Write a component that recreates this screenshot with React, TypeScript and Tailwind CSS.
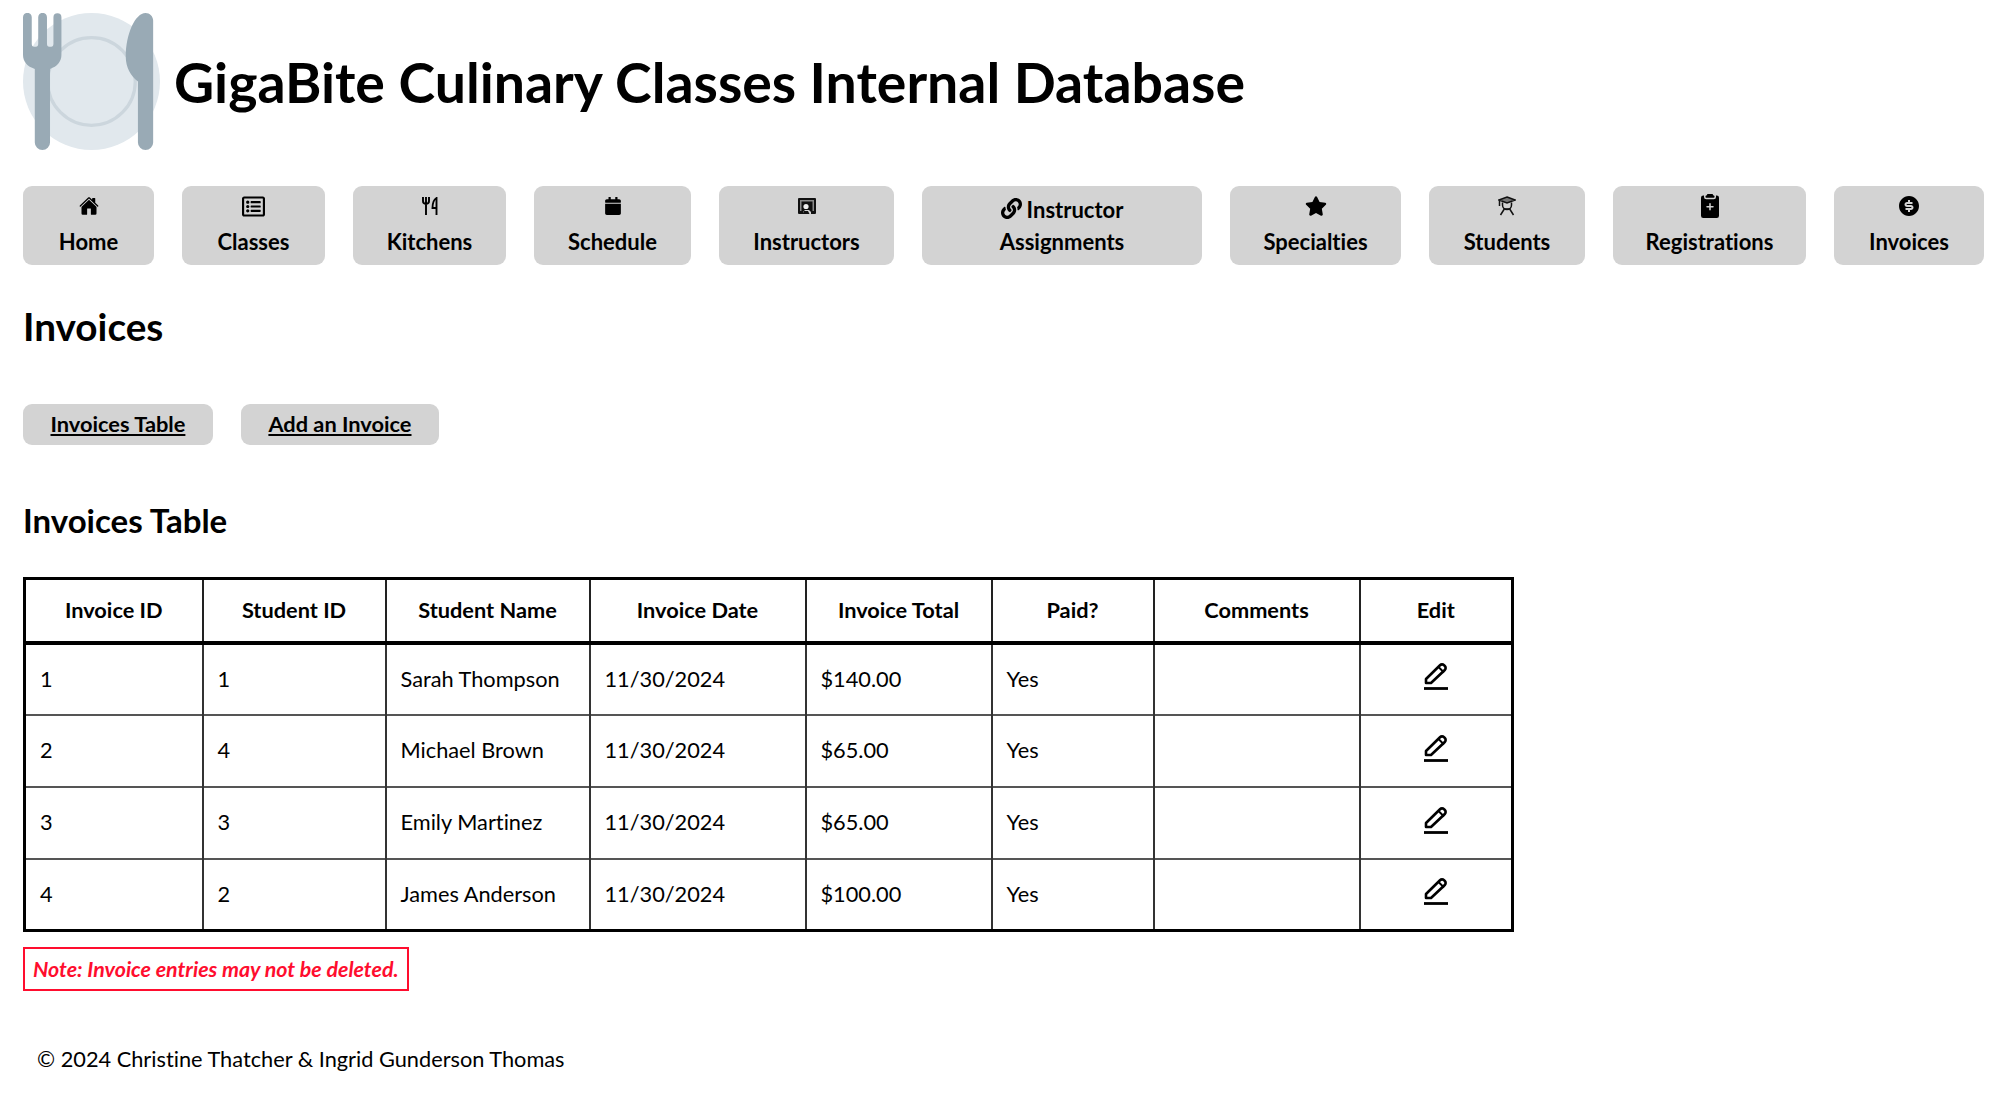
import { BsClipboard2PlusFill } from "react-icons/bs"
import { FaCalendar, FaLink, FaRegListAlt, FaStar } from "react-icons/fa"
import { IoHome } from "react-icons/io5"
import { RiMoneyDollarCircleFill } from "react-icons/ri"
import type { ReactNode } from "react"

const font = "font-['Lato','Open_Sans',sans-serif] [font-variant-ligatures:none]"

function PlateLogo() {
  return (
    <svg viewBox="0 0 36 36" className="h-[137px] w-[137px] shrink-0">
      <circle cx="18" cy="18" r="18" fill="#e1e8ed" />
      <circle cx="18" cy="18" r="11.500" fill="none" stroke="#ccd6dd" strokeWidth="0.850" />
      <path
        fill="#99aab5"
        d="M0 1.100a1.100 1.100 0 0 1 2.300 0v7c0 .5.200.8.600.8h.5c.4 0 .6-.3.600-.8v-7a1.100 1.100 0 0 1 2.300 0v7c0 .5.200.8.600.8h.5c.4 0 .6-.3.600-.8v-7a1.050 1.050 0 0 1 2.100 0V11c0 1.800-1.100 3.100-3 3.700V34a2 2 0 0 1-4 0V14.700C1.100 14.100 0 12.800 0 11z"
      />
      <path
        fill="#99aab5"
        d="M32.200 0c1.100 0 2 .9 2 2v32a2 2 0 0 1-4 0V18C28.300 16.600 27 14.200 27 11.500 27 5.500 29.500 0 32.200 0z"
      />
    </svg>
  )
}

function KitchenIcon() {
  return (
    <svg viewBox="0 0 16 18" className="h-[18px] w-[16px]" fill="none" stroke="#000" strokeWidth="1.900">
      <path d="M1 0v4c0 1.800 1 2.800 3 2.800S7 5.800 7 4V0M4 0v18" />
      <path d="M14.500 18V1C12 2.500 10.500 6 10.500 11h4" />
    </svg>
  )
}

function InstructorIcon() {
  return (
    <svg viewBox="0 0 18 16" className="h-[16px] w-[18px]">
      <path fill="#111" d="M1 0h16a1 1 0 0 1 1 1v14a1 1 0 0 1-1 1h-4v-2l-2-2H7l-2 2v2H1a1 1 0 0 1-1-1V1a1 1 0 0 1 1-1z" />
      <path fill="#8a8a8a" d="M2 2h14v11h-1.500V3.500h-11V13H2z" />
      <circle cx="8" cy="8.500" r="2.600" fill="#eeeeee" />
      <path fill="#111" d="M6 13h4l1.500 3h-7z" />
    </svg>
  )
}

function StudentIcon() {
  return (
    <svg viewBox="0 0 18 20" className="h-[20px] w-[18px]" fill="none" stroke="#111" strokeWidth="1.500">
      <path d="M9 1l8 3-8 3-8-3z" fill="#777" />
      <path d="M1.500 4.500V10" />
      <path d="M4.500 6.500V9a4.500 4.500 0 0 0 9 0V6.500" />
      <path d="M5.500 13h7M6 13.500L2.500 19M12 13.500l3.500 5.500" />
    </svg>
  )
}

function EditIcon() {
  return (
    <svg viewBox="0 0 26 28" className="h-[28px] w-[26px]" fill="none" stroke="#000">
      <path strokeWidth="2.600" strokeLinejoin="round" d="M3 21v-4L17 3.200a2.800 2.800 0 0 1 4 0l.800.800a2.800 2.800 0 0 1 0 4L8 21z" />
      <path strokeWidth="2" d="M15.500 5l5.500 5.500" />
      <path strokeWidth="2.800" d="M1 26.500h24" />
    </svg>
  )
}

function NavButton({ icon, label, inline, className }: { icon: ReactNode; label: ReactNode; inline?: boolean; className: string }) {
  return (
    <a className={`flex h-[79px] flex-col items-center rounded-[9px] bg-[#d3d3d3] pt-[4px] text-center text-[22px] leading-[32px] font-bold text-black ${className}`}>
      {inline ? (
        <span className="flex h-[36px] items-center gap-[5px]">{icon}<span className="pt-[3px]">Instructor</span></span>
      ) : (
        <span className="flex h-[32px] items-center">{icon}</span>
      )}
      <span className={inline ? "" : "pt-[4px]"}>{label}</span>
    </a>
  )
}

const invoices = [
  ["1", "1", "Sarah Thompson", "11/30/2024", "$140.00", "Yes"],
  ["2", "4", "Michael Brown", "11/30/2024", "$65.00", "Yes"],
  ["3", "3", "Emily Martinez", "11/30/2024", "$65.00", "Yes"],
  ["4", "2", "James Anderson", "11/30/2024", "$100.00", "Yes"],
]

const headers = ["Invoice ID", "Student ID", "Student Name", "Invoice Date", "Invoice Total", "Paid?", "Comments", "Edit"]

export default function App() {
  return (
    <div className={`${font} min-h-[1098px] bg-white pl-[23px] text-black`}>
      <header className="flex items-center gap-[14px] pt-[13px]">
        <PlateLogo />
        <h1 className="text-[55.4px] leading-[64px] font-bold">GigaBite Culinary Classes Internal Database</h1>
      </header>

      <nav className="mt-[36px] flex gap-[28px]">
        <NavButton className="w-[131px]" icon={<IoHome size={20} />} label="Home" />
        <NavButton className="w-[143px]" icon={<FaRegListAlt size={23} />} label="Classes" />
        <NavButton className="w-[153px]" icon={<KitchenIcon />} label="Kitchens" />
        <NavButton className="w-[157px]" icon={<FaCalendar size={18} />} label="Schedule" />
        <NavButton className="w-[175px]" icon={<InstructorIcon />} label="Instructors" />
        <NavButton inline className="w-[280px]" icon={<FaLink size={21} />} label="Assignments" />
        <NavButton className="w-[171px]" icon={<FaStar size={22} />} label="Specialties" />
        <NavButton className="w-[156px]" icon={<StudentIcon />} label="Students" />
        <NavButton className="w-[193px]" icon={<BsClipboard2PlusFill size={24} />} label="Registrations" />
        <NavButton className="w-[150px]" icon={<RiMoneyDollarCircleFill size={24} />} label="Invoices" />
      </nav>

      <h2 className="mt-[38px] text-[38.7px] leading-[46px] font-bold">Invoices</h2>

      <div className="mt-[55px] flex gap-[28px]">
        <a className="flex h-[41px] items-center rounded-[9px] bg-[#d3d3d3] px-[27.5px] text-[21.8px] font-bold underline">Invoices Table</a>
        <a className="flex h-[41px] items-center rounded-[9px] bg-[#d3d3d3] px-[27.5px] text-[21.8px] font-bold underline">Add an Invoice</a>
      </div>

      <h3 className="mt-[55px] text-[33px] leading-[40px] font-bold">Invoices Table</h3>

      <table className="mt-[37px] w-[1488px] table-fixed border-collapse border-[3px] border-black text-[21.75px]">
        <colgroup>
          <col className="w-[178px]" />
          <col className="w-[183px]" />
          <col className="w-[204px]" />
          <col className="w-[216px]" />
          <col className="w-[186px]" />
          <col className="w-[162px]" />
          <col className="w-[206px]" />
          <col className="w-[153px]" />
        </colgroup>
        <thead>
          <tr className="h-[64px] border-b-[4px] border-black">
            {headers.map((h) => (
              <th key={h} className="border-x-2 border-[#222] text-center font-bold">{h}</th>
            ))}
          </tr>
        </thead>
        <tbody>
          {invoices.map((row) => (
            <tr key={row[0]} className="h-[72px] border-b-2 border-[#555]">
              {row.map((cell, i) => (
                <td key={i} className="border-x-2 border-[#333] px-[14px]">{cell}</td>
              ))}
              <td className="border-x-2 border-[#333]" />
              <td className="border-x-2 border-[#333]">
                <div className="flex justify-center pb-[6px]"><EditIcon /></div>
              </td>
            </tr>
          ))}
        </tbody>
      </table>

      <p className="mt-[15px] w-fit border-[2px] border-[#ff0d2e] px-[8px] py-[6px] text-[21.4px] leading-[28px] font-bold text-[#ff0d2e] italic">
        Note: Invoice entries may not be deleted.
      </p>

      <footer className="mt-[54px] pl-[14px] text-[21.75px] leading-[28px]">© 2024 Christine Thatcher &amp; Ingrid Gunderson Thomas</footer>
    </div>
  )
}
